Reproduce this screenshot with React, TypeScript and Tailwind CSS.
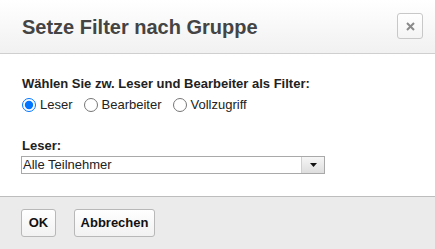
import { useState } from 'react';

const OPTIONS = ['Leser', 'Bearbeiter', 'Vollzugriff'];

export default function App() {
  const [role, setRole] = useState('Leser');

  return (
    <div className="w-[435px] h-[249px] flex flex-col bg-white text-[#222] overflow-hidden" style={{ fontFamily: '"Liberation Sans", Arial, sans-serif' }}>
      <div className="h-[54px] flex items-center justify-between pl-[22px] pr-[12px] border-b border-[#cfcfcf] bg-gradient-to-b from-white to-[#f1f1f1] shrink-0">
        <h1 className="text-[20px] font-bold text-[#444] leading-none pt-[1px]">Setze Filter nach Gruppe</h1>
        <button className="w-[26px] h-[26px] mb-[1px] flex items-center justify-center border border-[#c8c8c8] rounded-[3px] bg-gradient-to-b from-white to-[#f4f4f4]">
          <svg width="9" height="9" viewBox="0 0 9 9">
            <path d="M1 1 L8 8 M8 1 L1 8" stroke="#8a8a8a" strokeWidth="2" />
          </svg>
        </button>
      </div>

      <div className="flex-1 px-[21px] pt-[22px]">
        <div className="text-[13px] font-bold leading-[15px] pl-[1px]">Wählen Sie zw. Leser und Bearbeiter als Filter:</div>
        <div className="flex items-center mt-[6px] text-[13px] leading-[15px]">
          {OPTIONS.map((opt) => (
            <label key={opt} className="flex items-center mr-[10px]">
              <input
                type="radio"
                name="role"
                checked={role === opt}
                onChange={() => setRole(opt)}
                className="w-[14px] h-[14px] ml-[1px] mr-[4px] accent-[#0075ff]"
              />
              {opt}
            </label>
          ))}
        </div>

        <div className="text-[13px] font-bold leading-[15px] mt-[26px] pl-[1px]">Leser:</div>
        <div className="mt-[3px] w-[304px] h-[18px] flex border border-[#a9a9a9] bg-white">
          <div className="flex-1 text-[13px] leading-[16px] pl-[1px]">Alle Teilnehmer</div>
          <div className="w-[23px] h-full flex items-center justify-center border-l border-[#d0d0d0] bg-gradient-to-b from-[#f6f6f6] to-[#dedede]">
            <svg width="7" height="4" viewBox="0 0 7 4">
              <path d="M0 0 H7 L3.5 4 Z" fill="#111" />
            </svg>
          </div>
        </div>
      </div>

      <div className="h-[53px] shrink-0 flex items-center gap-[18px] px-[21px] border-t border-[#bdbdbd] bg-[#ebebeb]">
        <button className="h-[28px] w-[35px] border border-[#b8b8b8] rounded-[3px] bg-gradient-to-b from-white to-[#f2f2f2] text-[13px] font-bold text-[#111]">OK</button>
        <button className="h-[28px] w-[81px] border border-[#b8b8b8] rounded-[3px] bg-gradient-to-b from-white to-[#f2f2f2] text-[13px] font-bold text-[#111]">Abbrechen</button>
      </div>
    </div>
  );
}
